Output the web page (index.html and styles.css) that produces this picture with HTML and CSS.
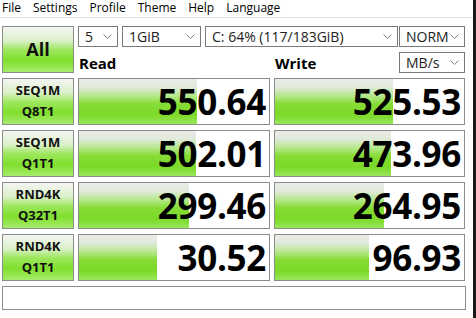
FILE: index.html
```html
<!DOCTYPE html>
<html lang="en">
<head>
    <meta charset="UTF-8">
    <title>CrystalDiskMark</title>
    <link rel="stylesheet" href="styles.css">
</head>
<body>
<div class="window">
    <div class="menu">
        <span>File</span>
        <span>Settings</span>
        <span>Profile</span>
        <span>Theme</span>
        <span>Help</span>
        <span>Language</span>
    </div>

    <div class="head">
        <div class="btn all">All</div>
        <div class="head-right">
            <div class="selects">
                <div class="select s-count"><span>5</span><svg width="9" height="5" viewBox="0 0 9 5"><path d="M0.5 0.5 L4.5 4.5 L8.5 0.5" fill="none" stroke="#808080"/></svg></div>
                <div class="select s-size"><span>1GiB</span><svg width="9" height="5" viewBox="0 0 9 5"><path d="M0.5 0.5 L4.5 4.5 L8.5 0.5" fill="none" stroke="#808080"/></svg></div>
                <div class="select s-drive"><span>C: 64% (117/183GiB)</span><svg width="9" height="5" viewBox="0 0 9 5"><path d="M0.5 0.5 L4.5 4.5 L8.5 0.5" fill="none" stroke="#808080"/></svg></div>
                <div class="select s-mode"><span>NORM</span><svg width="9" height="5" viewBox="0 0 9 5"><path d="M0.5 0.5 L4.5 4.5 L8.5 0.5" fill="none" stroke="#808080"/></svg></div>
            </div>
            <div class="titles">
                <div class="title t-read">Read</div>
                <div class="title t-write">Write</div>
                <div class="select s-unit"><span>MB/s</span><svg width="9" height="5" viewBox="0 0 9 5"><path d="M0.5 0.5 L4.5 4.5 L8.5 0.5" fill="none" stroke="#808080"/></svg></div>
            </div>
        </div>
    </div>

    <div class="results">
        <div class="btn label">SEQ1M<br>Q8T1</div>
        <div class="meter read"><div class="bar" style="width: 62%"></div><span>550.64</span></div>
        <div class="meter write"><div class="bar" style="width: 62.4%"></div><span>525.53</span></div>

        <div class="btn label">SEQ1M<br>Q1T1</div>
        <div class="meter read"><div class="bar" style="width: 61.5%"></div><span>502.01</span></div>
        <div class="meter write"><div class="bar" style="width: 61.4%"></div><span>473.96</span></div>

        <div class="btn label">RND4K<br>Q32T1</div>
        <div class="meter read"><div class="bar" style="width: 58%"></div><span>299.46</span></div>
        <div class="meter write"><div class="bar" style="width: 57.7%"></div><span>264.95</span></div>

        <div class="btn label">RND4K<br>Q1T1</div>
        <div class="meter read"><div class="bar" style="width: 41%"></div><span>30.52</span></div>
        <div class="meter write"><div class="bar" style="width: 49.7%"></div><span>96.93</span></div>
    </div>

    <div class="status"></div>
</div>
</body>
</html>
```

FILE: styles.css
```css
/* Global */
* {
    margin: 0;
    padding: 0;
    box-sizing: border-box;
}

body {
    background-color: #fff;
    font-family: "Open Sans", "Noto Sans", Arial, sans-serif;
    color: #000;
}

.window {
    width: 476px;
    height: 318px;
    border-right: 3px solid #1a1a1a;
    overflow: hidden;
}

/* Menu */
.menu {
    display: flex;
    height: 18px;
    padding-left: 2px;
    border-bottom: 1px solid #e3e3e3;
    font-size: 12px;
    line-height: 16px;
    color: #000;
}

.menu span {
    margin-right: 12px;
}

/* Buttons (green gradient) */
.btn {
    border: 1px solid #8c8c8c;
    background: linear-gradient(to bottom, #f4f6f2 0%, #dcf1ca 30%, #9be65a 52%, #80df2e 75%, #a6ec6c 100%);
    font-weight: bold;
    text-align: center;
    color: #111;
}

/* Header */
.head {
    display: flex;
    gap: 4px;
    margin-top: 8px;
    padding-left: 2px;
}

.all {
    width: 72px;
    height: 47px;
    font-size: 18px;
    line-height: 45px;
}

.head-right {
    display: flex;
    flex-direction: column;
    gap: 5px;
}

.selects,
.titles {
    display: flex;
    height: 21px;
}

.select {
    display: flex;
    align-items: center;
    justify-content: space-between;
    height: 21px;
    border: 1px solid #7a7a7a;
    padding: 0 5px 0 6px;
    font-size: 14px;
    color: #222;
    background: #fff;
}

.s-count { width: 40px; margin-right: 4px; }
.s-size { width: 79px; margin-right: 4px; }
.s-drive { width: 193px; margin-right: 1px; }
.s-mode { width: 66px; }
.s-unit { width: 66px; }

.title {
    font-size: 15px;
    font-weight: bold;
    line-height: 22px;
}

.t-read { width: 197px; padding-left: 1px; }
.t-write { width: 124px; }

/* Result rows */
.results {
    display: grid;
    grid-template-columns: 72px 192px 191px;
    grid-auto-rows: 47px;
    column-gap: 4px;
    row-gap: 5px;
    margin-top: 5px;
    padding-left: 2px;
}

.label {
    font-size: 13px;
    line-height: 21px;
    padding-top: 1px;
}

.meter {
    position: relative;
    border: 1px solid #8c8c8c;
    background: #fff;
    text-align: right;
}

.bar {
    position: absolute;
    top: 0;
    left: 0;
    bottom: 0;
    background: linear-gradient(to bottom, #eaebe8 0%, #e0eada 18%, #b4e88a 38%, #86dc36 55%, #7cd928 80%, #9ae75a 100%);
}

.meter span {
    position: relative;
    display: block;
    padding-right: 3px;
    font-size: 35px;
    font-weight: bold;
    line-height: 45px;
    letter-spacing: -0.3px;
}

/* Status */
.status {
    width: 464px;
    height: 24px;
    margin: 5px 0 0 2px;
    border: 1px solid #8c8c8c;
}
```
